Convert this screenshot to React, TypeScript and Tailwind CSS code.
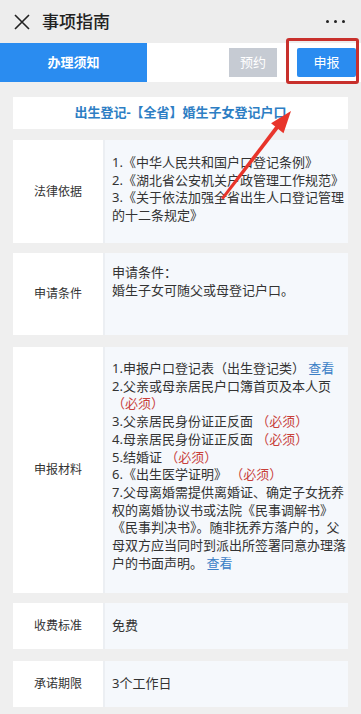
import React from "react";

const Req = () => <span className="text-[#c8403a]">（必须）</span>;
const Look = () => <span className="text-[#3b80c6]">查看</span>;

const Row = ({
  label,
  h,
  pt,
  children,
}: {
  label: string;
  h: string;
  pt: string;
  children: React.ReactNode;
}) => (
  <div className={`flex mx-[13px] ${h}`}>
    <div className="w-[92px] shrink-0 bg-white flex items-center justify-center text-[12px] text-[#333] border-r-2 border-[#eceff3]">
      {label}
    </div>
    <div className={`flex-1 bg-[#f5f8fc] pl-[7px] text-[13px] leading-[17.7px] text-[#333] whitespace-nowrap ${pt}`}>
      {children}
    </div>
  </div>
);

export default function App() {
  return (
    <div
      className="relative w-[361px] h-[714px] bg-[#efefef] overflow-hidden"
      style={{ fontFamily: '"Noto Sans", "Noto Sans CJK SC", sans-serif' }}
    >
      {/* header */}
      <div className="h-[43px] bg-[#ededed] flex items-center pl-[14px] pr-[16px]">
        <svg width="16" height="16" viewBox="0 0 16 16" className="shrink-0">
          <path d="M1 1L15 15M15 1L1 15" stroke="#222" strokeWidth="1.6" />
        </svg>
        <div className="ml-[12px] text-[17px] font-medium text-[#222]">事项指南</div>
        <div className="ml-auto flex gap-[5px]">
          <span className="w-[3px] h-[3px] rounded-full bg-[#222]" />
          <span className="w-[3px] h-[3px] rounded-full bg-[#222]" />
          <span className="w-[3px] h-[3px] rounded-full bg-[#222]" />
        </div>
      </div>

      {/* tabs */}
      <div className="h-[39px] bg-white flex items-center">
        <div className="w-[147px] h-full bg-[#2a8cf0] text-white text-[13px] font-bold flex items-center justify-center">
          办理须知
        </div>
        <div className="ml-[82px] w-[48px] h-[29px] bg-[#c6cbd3] text-white text-[13px] flex items-center justify-center">
          预约
        </div>
        <div className="ml-[20px] w-[59px] h-[29px] bg-[#2a8cf0] text-white text-[13px] flex items-center justify-center rounded-[2px]">
          申报
        </div>
      </div>

      {/* title */}
      <div className="mx-[13px] mt-[15px] h-[32px] bg-white flex items-center justify-center text-[13px] font-bold text-[#2d7ec4]">
        出生登记-【全省】婚生子女登记户口
      </div>

      <div className="mt-[11px] flex flex-col gap-[10px]">
        <Row label="法律依据" h="h-[103px]" pt="pt-[14px]">
          <div>1.《中华人民共和国户口登记条例》</div>
          <div>2.《湖北省公安机关户政管理工作规范》</div>
          <div>3.《关于依法加强全省出生人口登记管理</div>
          <div>的十二条规定》</div>
        </Row>
        <Row label="申请条件" h="h-[82px]" pt="pt-[11px]">
          <div>申请条件：</div>
          <div>婚生子女可随父或母登记户口。</div>
        </Row>
        <div className="mt-[2px]">
          <Row label="申报材料" h="h-[246px]" pt="pt-[13px]">
            <div>
              1.申报户口登记表（出生登记类） <Look />
            </div>
            <div>2.父亲或母亲居民户口簿首页及本人页</div>
            <div>
              <Req />
            </div>
            <div>
              3.父亲居民身份证正反面 <Req />
            </div>
            <div>
              4.母亲居民身份证正反面 <Req />
            </div>
            <div>
              5.结婚证 <Req />
            </div>
            <div>
              6.《出生医学证明》 <Req />
            </div>
            <div>7.父母离婚需提供离婚证、确定子女抚养</div>
            <div>权的离婚协议书或法院《民事调解书》</div>
            <div>《民事判决书》。随非抚养方落户的，父</div>
            <div>母双方应当同时到派出所签署同意办理落</div>
            <div>
              户的书面声明。 <Look />
            </div>
          </Row>
        </div>
        <Row label="收费标准" h="h-[46px] items-stretch" pt="flex items-center">
          免费
        </Row>
        <div className="mt-[2px]">
          <Row label="承诺期限" h="h-[46px]" pt="flex items-center">
            3个工作日
          </Row>
        </div>
      </div>

      {/* annotation overlay */}
      <div className="absolute left-[286px] top-[38px] w-[73px] h-[46px] border-[3px] border-[#c8302c] rounded-[3px] pointer-events-none" />
      <svg className="absolute inset-0 pointer-events-none" width="361" height="714">
        <polygon points="221,198 223.5,199.5 279,128 275.5,126" fill="#e8342a" />
        <polygon points="291,111 283.5,133.2 271.1,123.2" fill="#e8342a" />
      </svg>
    </div>
  );
}
